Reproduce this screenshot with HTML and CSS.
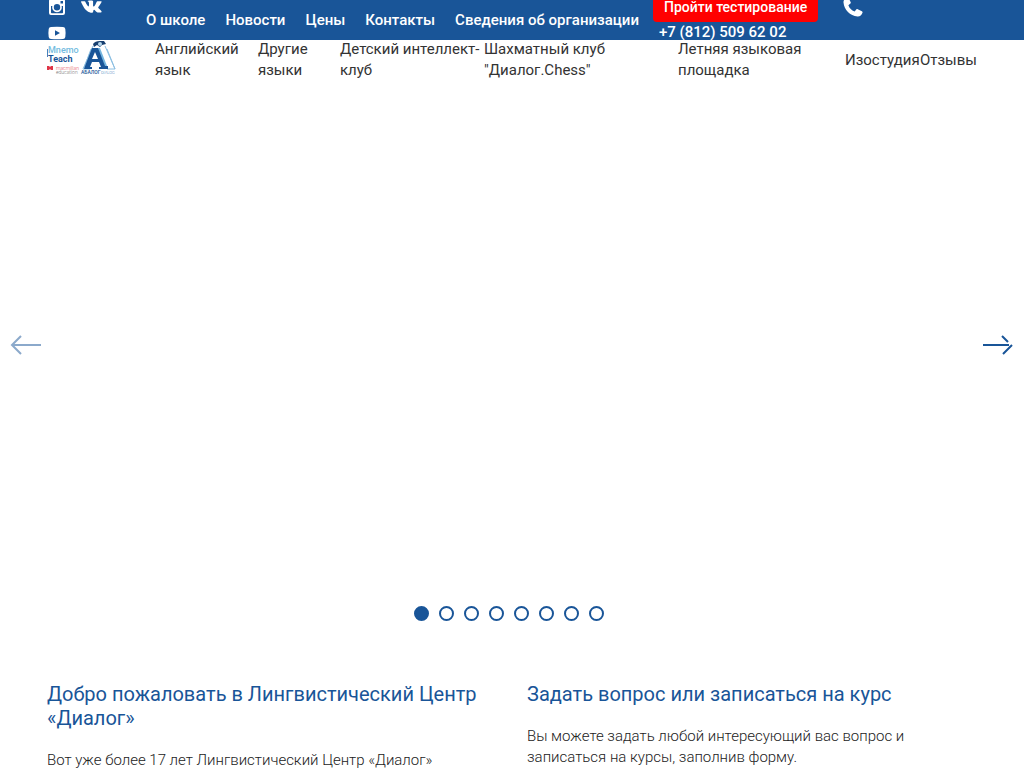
FILE: index.html
```html
<!DOCTYPE html>
<html lang="ru">
<head>
<meta charset="utf-8">
<meta name="viewport" content="width=device-width, initial-scale=1">
<title>Лингвистический Центр «Диалог»</title>
<link rel="stylesheet" href="styles.css">
</head>
<body>
<header>
  <div class="topbar">
    <div class="social">
      <a href="#" aria-label="Instagram"><svg width="20" height="20" viewBox="0 0 20 20"><path fill="#fff" fill-rule="evenodd" d="M4 2h12a2 2 0 0 1 2 2v12a2 2 0 0 1-2 2H4a2 2 0 0 1-2-2V4a2 2 0 0 1 2-2zM4 9v6.500a.8.8 0 0 0 .8.8h10.400a.8.8 0 0 0 .8-.8V9h-1.400a4.800 4.800 0 1 1-9.200 0zM13.500 4v2.500H16V4zM10 7a3.200 3.200 0 1 0 0 6.400A3.200 3.200 0 0 0 10 7z"/></svg></a>
      <a href="#" aria-label="ВКонтакте"><svg width="20" height="20" viewBox="-1 -1 21 21"><path fill="#fff" d="M9.700 15.500h1.200s.5-.1.700-.4c.2-.2.200-.8.200-.8s0-1.700.8-2c.8-.2 1.800 1.700 2.900 2.500.8.600 1.400.5 1.400.5l2.800-.1s1.500-.1.800-1.300c-.1-.1-.4-.8-2.200-2.400-1.800-1.700-1.600-1.400.6-4.400 1.300-1.800 1.900-2.900 1.700-3.300-.1-.4-1.100-.3-1.100-.3h-3.200s-.3 0-.5.1-.3.400-.3.400-.5 1.400-1.200 2.500c-1.400 2.400-2 2.500-2.200 2.400-.6-.4-.4-1.500-.4-2.300 0-2.400.4-3.400-.7-3.700-.4-.1-.6-.2-1.600-.2-1.200 0-2.200 0-2.800.3-.4.200-.7.600-.5.700.2 0 .7.100 1 .5.300.5.300 1.500.3 1.500s.2 2.700-.4 3.100c-.5.300-1-.3-2.300-2.400C4.100 5.200 3.600 4 3.600 4s-.1-.3-.3-.4c-.3-.2-.6-.2-.6-.2H-.3s-.5 0-.6.2c-.2.200 0 .6 0 .6s2.400 5.600 5.100 8.400c2.500 2.600 5.500 2.900 5.500 2.900z"/></svg></a>
      <a href="#" aria-label="YouTube"><svg width="20" height="20" viewBox="0 0 20 20"><path fill="#fff" fill-rule="evenodd" d="M4 4q6-.6 12 0 2 .2 2.300 2 .6 4 0 8-.3 1.800-2.300 2-6 .6-12 0-2-.2-2.300-2-.6-4 0-8Q2 4.200 4 4zM8 7.300v5.400l5-2.700z"/></svg></a>
    </div>
    <nav class="topnav">
      <a href="#">О школе</a><a href="#">Новости</a><a href="#">Цены</a><a href="#">Контакты</a><a href="#">Сведения об организации</a>
    </nav>
    <div class="contacts">
      <div class="contact-row">
        <button class="test" type="button">Пройти тестирование</button>
        <svg width="22" height="22" viewBox="0 0 22 22"><path fill="#fff" d="M5.200 1.500C3 2.400 1.300 4 1.500 6.500c.7 7.500 6.500 13.300 14 14 2.500.2 4.100-1.500 5-3.700.2-.6 0-1.200-.6-1.500l-4.200-2.100c-.5-.2-1-.1-1.400.3l-1.700 2c-3.200-1.200-5-3-6.200-6.200l2-1.700c.4-.4.5-.9.300-1.400L6.700 2.100c-.3-.6-.9-.8-1.500-.6z"/></svg>
      </div>
      <a class="phone" href="tel:+78125096202">+7 (812) 509 62 02</a>
    </div>
  </div>
  <div class="mainbar">
    <a class="logo" href="#" aria-label="Диалог">
      <svg width="72" height="38" viewBox="0 0 72 38">
        <g font-family="Roboto, sans-serif">
          <text x="1" y="12" font-size="9" font-weight="500" fill="#74bce0">Mnemo</text>
          <text x="1" y="21" font-size="9" font-weight="700" fill="#195598">Teach</text>
          <text x="9" y="29" font-size="5" fill="#e55361">macmillan</text>
          <text x="9" y="33" font-size="5" fill="#777">education</text>
          <text x="34" y="33" font-size="5" font-weight="500" fill="#195598">АБАЛОГ</text>
          <text x="54" y="33" font-size="4" fill="#4683bd">DIALOG</text>
        </g>
        <path d="M0.500 8v8" stroke="#4683bd"/>
        <path fill="#df3547" d="M0 25h2l1 1 1-1h2v4H4l-1-1-1 1H0z"/>
        <path fill="none" stroke="#8cbfe2" d="M46 5 36 28h7M58 5l10 23h-8M60 8l8 20M44 8l-7 19"/>
        <path fill="#195598" fill-rule="evenodd" d="m45 7-7 18-1 3h8v-2h-2l2-5h7l2 5h-2v2h9v-3h-2L52 7zM48 11l3 7h-6z"/>
        <path fill="#73b5df" d="m51 7 7 18h2L53 7z"/>
        <path fill="#173f70" d="M46 3q2-3 7-3l4 0 2 3-4 1-2 2-3-2-3 2z"/>
        <circle cx="53" cy="3" r="2" fill="#b7d8ed"/>
      </svg>
    </a>
    <nav class="mainnav">
      <a href="#">Английский язык</a><a href="#">Другие языки</a><a href="#">Детский интеллект-клуб</a><a href="#">Шахматный клуб "Диалог.Chess"</a><a href="#">Летняя языковая площадка</a><a href="#">Изостудия</a><a href="#">Отзывы</a>
    </nav>
  </div>
</header>
<main>
  <section class="slider" aria-label="Слайдер">
    <div class="stage">
      <button class="arrow" type="button" aria-label="Назад" disabled><svg width="32" height="22" viewBox="0 0 32 22"><path fill="none" stroke="#195598" stroke-width="2" d="M31 11H2M11 2l-9 9 9 9"/></svg></button>
      <button class="arrow" type="button" aria-label="Вперёд"><svg width="32" height="22" viewBox="0 0 32 22"><path fill="none" stroke="#195598" stroke-width="2" d="M1 11h26M20 2l6 6M30 11l-9 9"/></svg></button>
    </div>
    <div class="dots">
      <button class="dot active" type="button" aria-label="Слайд 1"></button><button class="dot" type="button" aria-label="Слайд 2"></button><button class="dot" type="button" aria-label="Слайд 3"></button><button class="dot" type="button" aria-label="Слайд 4"></button><button class="dot" type="button" aria-label="Слайд 5"></button><button class="dot" type="button" aria-label="Слайд 6"></button><button class="dot" type="button" aria-label="Слайд 7"></button><button class="dot" type="button" aria-label="Слайд 8"></button>
    </div>
  </section>
  <div class="intro">
    <section>
      <h2>Добро пожаловать в Лингвистический Центр «Диалог»</h2>
      <p>Вот уже более 17 лет Лингвистический Центр «Диалог»</p>
    </section>
    <section>
      <h2>Задать вопрос или записаться на курс</h2>
      <p>Вы можете задать любой интересующий вас вопрос и записаться на курсы, заполнив форму.</p>
    </section>
  </div>
</main>
</body>
</html>
```
FILE: styles.css
```css
* { box-sizing: border-box; }
body {
  margin: 0;
  background: #fff;
  color: #222;
  font: 300 15px/21px Roboto, sans-serif;
}
a { color: inherit; text-decoration: none; }
button { border: 0; padding: 0; background: none; font: inherit; color: inherit; }
svg { display: block; overflow: visible; flex: none; }
.topbar {
  display: flex;
  align-items: center;
  height: 40px;
  padding: 0 47px;
  overflow: hidden;
  background: #195598;
  color: #fff;
  font-size: 15px;
  font-weight: 500;
}
.social {
  display: flex;
  flex: none;
  flex-wrap: wrap;
  gap: 6px 14px;
  width: 80px;
  margin-right: 19px;
}
.topnav { display: flex; flex: none; gap: 20px; white-space: nowrap; }
.contacts { flex: none; margin: 0 0 5px 14px; }
.contact-row { display: flex; align-items: center; gap: 24px; }
.test {
  height: 30px;
  padding: 0 11px;
  border-radius: 4px;
  background: #f00;
  font-size: 14px;
  white-space: nowrap;
}
.phone { display: block; padding-left: 6px; }
.mainbar {
  display: flex;
  align-items: center;
  height: 40px;
  padding: 0 47px;
}
.logo { flex: none; width: 108px; }
.mainnav {
  display: grid;
  flex: 1;
  grid-template-columns: 103fr 82fr 144fr 194fr 167fr 75fr 57fr;
  align-items: center;
  color: #333;
  font-weight: 400;
}
.mainnav a:nth-child(1), .mainnav a:nth-child(2) { padding-right: 10px; }
.mainnav a:nth-child(4), .mainnav a:nth-child(5) { padding-right: 40px; }
.stage {
  display: flex;
  align-items: center;
  justify-content: space-between;
  min-height: 526px;
  padding: 4px 10px 0;
}
.arrow:disabled { opacity: .5; }
.dots { display: flex; justify-content: center; gap: 10px; padding-right: 6px; }
.dot {
  width: 15px;
  height: 15px;
  border: 2px solid #195598;
  border-radius: 50%;
}
.dot.active { background: #195598; }
.intro {
  display: grid;
  grid-template-columns: 1fr 1fr;
  gap: 30px;
  padding: 61px 47px 0;
}
h2 {
  margin: 0 0 20px;
  color: #195598;
  font-size: 20px;
  font-weight: 400;
  line-height: 24px;
}
p { margin: 0; }
```
